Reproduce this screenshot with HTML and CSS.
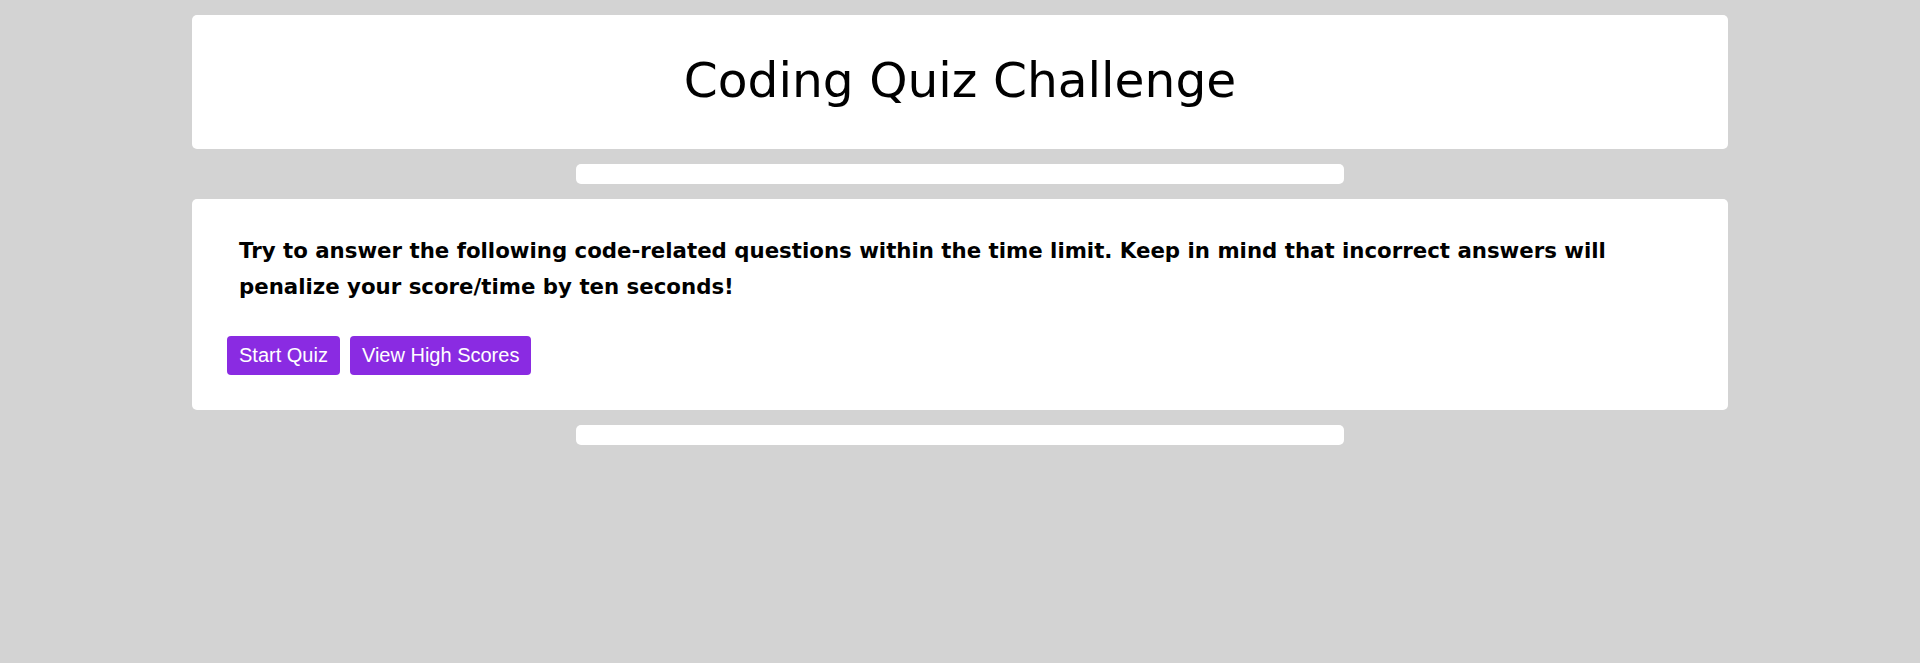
FILE: index.html
```html
<!DOCTYPE html>
<html lang="en">
<head>
<meta charset="utf-8">
<title>Coding Quiz Challenge</title>
<link rel="stylesheet" href="styles.css">
</head>
<body>
<main class="page">
  <header class="card header-card">
    <h1 class="title">Coding Quiz Challenge</h1>
  </header>
  <div class="bar"></div>
  <section class="card intro-card">
    <p class="intro">Try to answer the following code-related questions within the time limit. Keep in mind that incorrect answers will penalize your score/time by ten seconds!</p>
    <div class="actions">
      <button class="btn" type="button">Start Quiz</button>
      <button class="btn" type="button">View High Scores</button>
    </div>
  </section>
  <div class="bar"></div>
</main>
</body>
</html>
```

FILE: styles.css
```css
html, body {
  margin: 0;
  padding: 0;
}

body {
  background: #d3d3d3;
  font-family: "DejaVu Sans", sans-serif;
  color: #000;
  height: 663px;
}

.page {
  display: flex;
  flex-direction: column;
  align-items: center;
  gap: 15px;
  padding-top: 15px;
}

.card {
  width: 1536px;
  background: #fff;
  border-radius: 5px;
  box-sizing: border-box;
}

.header-card {
  padding: 37px 0 41px;
  text-align: center;
}

.title {
  margin: 0;
  font-size: 48.7px;
  line-height: 56px;
  font-weight: normal;
}

.bar {
  width: 768px;
  height: 20px;
  background: #fff;
  border-radius: 5px;
}

.intro-card {
  padding: 34px 35px 34px;
  height: 211px;
}

.intro {
  margin: 0;
  padding: 0 13px 0 12px;
  font-size: 21.3px;
  font-weight: bold;
  line-height: 36px;
}

.actions {
  display: flex;
  gap: 10px;
  margin-top: 31px;
}

.btn {
  font-family: "Liberation Sans", Arial, sans-serif;
  font-size: 20px;
  line-height: 23px;
  padding: 8px 12px;
  color: #fff;
  background: #8a2be2;
  border: none;
  border-radius: 4px;
}
```
